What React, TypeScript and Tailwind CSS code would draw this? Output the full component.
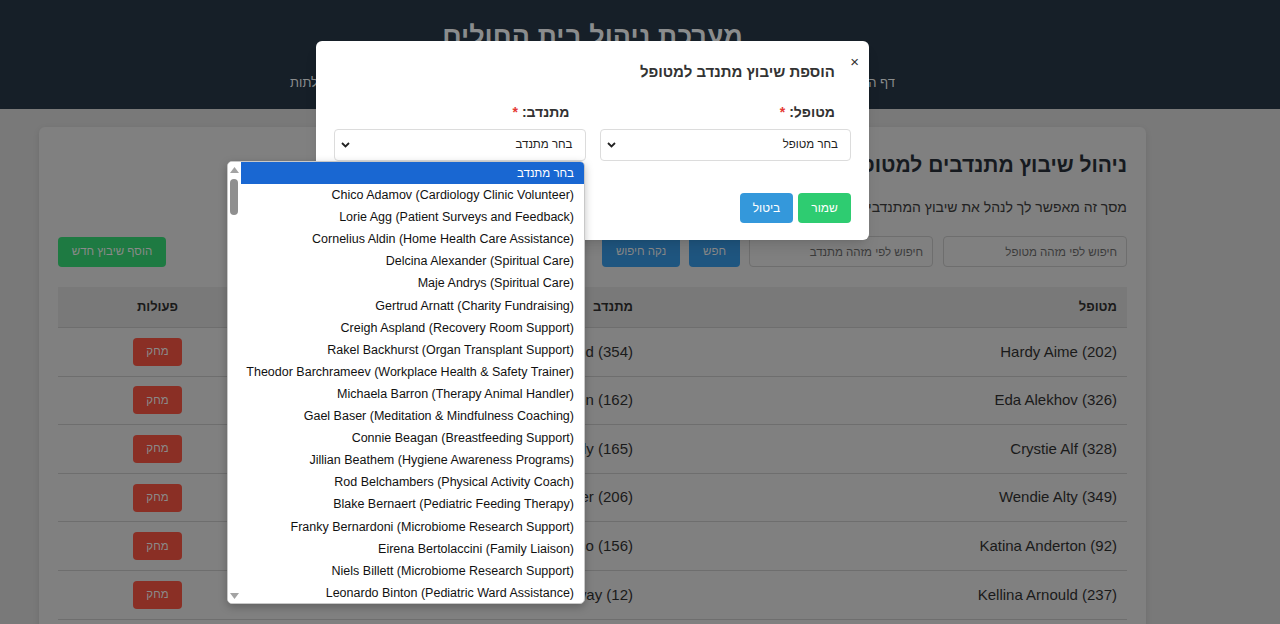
import React from 'react'

const volunteerOptions = [
  'Chico Adamov (Cardiology Clinic Volunteer)',
  'Lorie Agg (Patient Surveys and Feedback)',
  'Cornelius Aldin (Home Health Care Assistance)',
  'Delcina Alexander (Spiritual Care)',
  'Maje Andrys (Spiritual Care)',
  'Gertrud Arnatt (Charity Fundraising)',
  'Creigh Aspland (Recovery Room Support)',
  'Rakel Backhurst (Organ Transplant Support)',
  'Theodor Barchrameev (Workplace Health & Safety Trainer)',
  'Michaela Barron (Therapy Animal Handler)',
  'Gael Baser (Meditation & Mindfulness Coaching)',
  'Connie Beagan (Breastfeeding Support)',
  'Jillian Beathem (Hygiene Awareness Programs)',
  'Rod Belchambers (Physical Activity Coach)',
  'Blake Bernaert (Pediatric Feeding Therapy)',
  'Franky Bernardoni (Microbiome Research Support)',
  'Eirena Bertolaccini (Family Liaison)',
  'Niels Billett (Microbiome Research Support)',
  'Leonardo Binton (Pediatric Ward Assistance)',
]

const assignments = [
  { patient: 'Hardy Aime (202)', volunteer: 'Caro Rowland (354)' },
  { patient: 'Eda Alekhov (326)', volunteer: 'Abbe Linton (162)' },
  { patient: 'Crystie Alf (328)', volunteer: 'Shel Tilly (165)' },
  { patient: 'Wendie Alty (349)', volunteer: 'Ermin Baxter (206)' },
  { patient: 'Katina Anderton (92)', volunteer: 'Gino Franco (156)' },
  { patient: 'Kellina Arnould (237)', volunteer: 'Dael Holloway (12)' },
]

const navItems = ['דף הבית', 'מטופלים', 'מתנדבים', 'התמחויות', 'שיבוץ מתנדבים', 'שאילתות']

function Chevron() {
  return (
    <svg width="9" height="6" viewBox="0 0 9 6" className="shrink-0">
      <path d="M1 1l3.5 3.5L8 1" fill="none" stroke="#222" strokeWidth="1.8" />
    </svg>
  )
}

function FakeSelect({ label }: { label: string }) {
  return (
    <div className="flex h-[32px] items-center justify-between rounded-[4px] border border-[#dcdcdc] bg-white pl-[6px] pr-[12px] text-[11.5px] text-[#222]">
      <span>{label}</span>
      <Chevron />
    </div>
  )
}

export default function App() {
  return (
    <div dir="rtl" className="relative h-[624px] overflow-hidden font-[Liberation_Sans,Arial,sans-serif]">
      {/* page behind the modal, in its backdrop-dimmed colours */}
      <div className="h-[624px] bg-[#797979] text-[#1a1a1a]">
        <header className="h-[109px] bg-[#161f28]">
          <div className="mr-auto flex w-[1185px] flex-col items-center pt-[17px]">
            <h1 className="text-[27px] font-bold leading-[38px] text-[#8a8c8d]">מערכת ניהול בית החולים</h1>
            <nav className="mt-[18px] flex gap-[55px] text-[13px] leading-[20px] text-[#8a8c8d]">
              {navItems.map((item) => (
                <span key={item}>{item}</span>
              ))}
            </nav>
          </div>
        </header>

        <main className="mr-auto w-[1185px] px-[39px] pt-[18px]">
          <div className="h-[520px] rounded-[6px] bg-[#808080] px-[19px] pt-[25px] shadow-[0_2px_6px_rgba(0,0,0,0.1)]">
            <h2 className="text-[21px] font-bold leading-[26px] text-[#161a1f]">ניהול שיבוץ מתנדבים למטופלים</h2>
            <p className="mt-[19px] text-[14px] leading-[20px] text-[#222]">
              מסך זה מאפשר לך לנהל את שיבוץ המתנדבים למטופלים בבית החולים. ניתן להוסיף שיבוץ חדש, לחפש ולמחוק שיבוצים קיימים.
            </p>

            <div className="mt-[19px] flex items-center justify-between">
              <div className="flex items-center">
                <input
                  placeholder="חיפוש לפי מזהה מטופל"
                  className="h-[31px] w-[184px] rounded-[4px] border border-[#6e6e6e] bg-[#808080] px-[9px] text-[11.5px] placeholder:text-[#3c3c3c]"
                />
                <input
                  placeholder="חיפוש לפי מזהה מתנדב"
                  className="mr-[10px] h-[31px] w-[184px] rounded-[4px] border border-[#6e6e6e] bg-[#808080] px-[9px] text-[11.5px] placeholder:text-[#3c3c3c]"
                />
                <button className="mr-[9px] h-[31px] w-[51px] rounded-[4px] bg-[#1f5680] text-[11.5px] text-[#8a8a8a]">חפש</button>
                <button className="mr-[9px] h-[31px] w-[78px] rounded-[4px] bg-[#1f5680] text-[11.5px] text-[#8a8a8a]">נקה חיפוש</button>
              </div>
              <button className="h-[30px] w-[108px] rounded-[4px] bg-[#1e7a42] text-[11.5px] text-[#8a8a8a]">הוסף שיבוץ חדש</button>
            </div>

            <div className="mt-[20px] text-[15px]">
              <div className="flex h-[41px] items-center border-b border-[#6e6e6e] bg-[#797979] text-[13px] font-bold">
                <div className="w-[484px] px-[10px]">מטופל</div>
                <div className="w-[386px] px-[10px]">מתנדב</div>
                <div className="flex-1 px-[10px] text-center">פעולות</div>
              </div>
              {assignments.map((row) => (
                <div key={row.patient} className="flex h-[48.6px] items-center border-b border-[#6e6e6e]">
                  <div className="w-[484px] px-[10px]">{row.patient}</div>
                  <div className="w-[386px] px-[10px]">{row.volunteer}</div>
                  <div className="flex flex-1 justify-center px-[10px]">
                    <button className="h-[28px] w-[49px] rounded-[4px] bg-[#8a2f25] text-[11.5px] text-[#8a8a8a]">מחק</button>
                  </div>
                </div>
              ))}
            </div>
          </div>
        </main>
      </div>

      {/* modal layer */}
      <div className="absolute inset-0">
        <div className="absolute left-[316px] top-[41px] h-[199px] w-[553px] rounded-[6px] bg-white px-[18px] pt-[18px] shadow-lg">
          <span className="absolute right-[10px] top-[13px] text-[15px] leading-[15px] text-[#333]">×</span>
          <h3 className="pr-[16px] text-[15px] font-bold leading-[26px] text-[#333]">הוספת שיבוץ מתנדב למטופל</h3>

          <div className="mt-[18px] grid grid-cols-2 gap-[14px]">
            <div>
              <label className="block pr-[16px] text-[14px] font-bold leading-[18px] text-[#333]">
                מטופל: <span className="text-[#e53935]">*</span>
              </label>
              <div className="mt-[8px]">
                <FakeSelect label="בחר מטופל" />
              </div>
            </div>
            <div>
              <label className="block pr-[16px] text-[14px] font-bold leading-[18px] text-[#333]">
                מתנדב: <span className="text-[#e53935]">*</span>
              </label>
              <div className="mt-[8px]">
                <FakeSelect label="בחר מתנדב" />
              </div>
            </div>
          </div>

          <div className="mt-[32px] flex gap-[5px]">
            <button className="h-[30px] w-[53px] rounded-[4px] bg-[#2ecc71] text-[12px] text-white">שמור</button>
            <button className="h-[30px] w-[53px] rounded-[4px] bg-[#3498db] text-[12px] text-white">ביטול</button>
          </div>
        </div>

        {/* open native-style option list */}
        <div dir="ltr" className="absolute left-[227px] top-[161px] flex h-[443px] w-[358px] overflow-hidden rounded-[5px] border border-[#c8c8c8] bg-white shadow-[0_3px_8px_rgba(0,0,0,0.25)]">
          <div className="relative w-[13px] shrink-0 bg-white">
            <svg width="9" height="6" viewBox="0 0 9 6" className="absolute left-[2px] top-[5px]">
              <path d="M0 6l4.5-6L9 6z" fill="#a3a3a3" />
            </svg>
            <div className="absolute left-[2px] top-[17px] h-[36px] w-[8px] rounded-full bg-[#8f8f8f]" />
            <svg width="9" height="6" viewBox="0 0 9 6" className="absolute bottom-[4px] left-[2px]">
              <path d="M0 0l4.5 6L9 0z" fill="#a3a3a3" />
            </svg>
          </div>
          <div dir="rtl" className="min-w-0 flex-1 text-[12.5px] text-[#111]">
            <div className="h-[22.1px] bg-[#1967d2] pr-[10px] text-[11.5px] leading-[22px] text-white">בחר מתנדב</div>
            {volunteerOptions.map((v) => (
              <div key={v} dir="ltr" className="h-[22.1px] whitespace-nowrap pr-[10px] text-right leading-[22px]">
                {v}
              </div>
            ))}
          </div>
        </div>
      </div>
    </div>
  )
}
